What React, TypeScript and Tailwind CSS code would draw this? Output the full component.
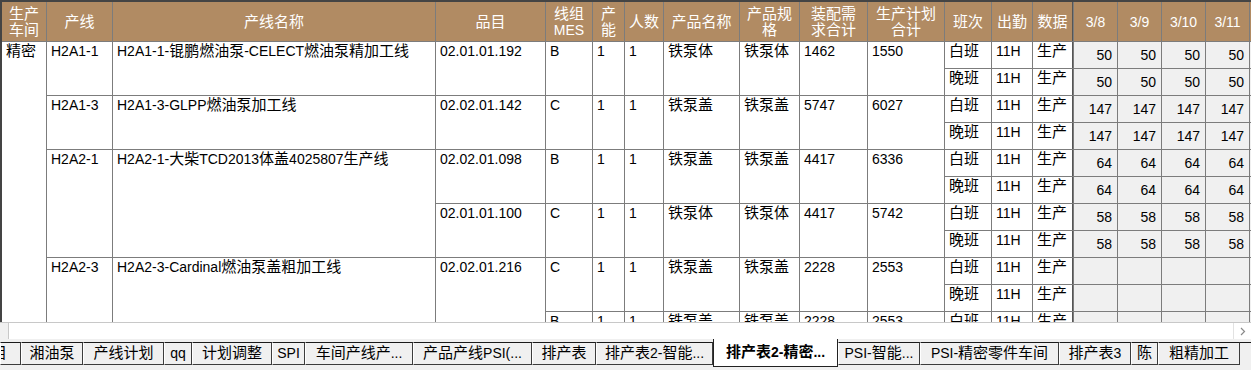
import clsx from "clsx";

const CJK = /([\u3400-\u9fff]+)/;

// CJK runs render a touch larger than the Latin text, like the sheet does
function Txt({ s }: { s: string }) {
  return (
    <span>
      {s.split(CJK).map((p, i) =>
        i % 2 ? (
          <span key={i} className="text-[15px]">
            {p}
          </span>
        ) : (
          p
        )
      )}
    </span>
  );
}

const SPAN: Record<number, string> = {
  2: "row-span-2",
  4: "row-span-4",
  12: "row-span-12",
};

const HEAD = [
  "生产\n车间",
  "产线",
  "产线名称",
  "品目",
  "线组\nMES",
  "产\n能",
  "人数",
  "产品名称",
  "产品规\n格",
  "装配需\n求合计",
  "生产计划\n合计",
  "班次",
  "出勤",
  "数据",
  "3/8",
  "3/9",
  "3/10",
  "3/11",
  "",
];

const LINES = [
  { at: 0, groups: 1, code: "H2A1-1", name: "H2A1-1-锟鹏燃油泵-CELECT燃油泵精加工线" },
  { at: 1, groups: 1, code: "H2A1-3", name: "H2A1-3-GLPP燃油泵加工线" },
  { at: 2, groups: 2, code: "H2A2-1", name: "H2A2-1-大柴TCD2013体盖4025807生产线" },
  { at: 4, groups: 2, code: "H2A2-3", name: "H2A2-3-Cardinal燃油泵盖粗加工线" },
];

const ITEMS = [
  { at: 0, groups: 1, code: "02.01.01.192" },
  { at: 1, groups: 1, code: "02.02.01.142" },
  { at: 2, groups: 1, code: "02.02.01.098" },
  { at: 3, groups: 1, code: "02.01.01.100" },
  { at: 4, groups: 2, code: "02.02.01.216" },
];

const GROUPS = [
  { mes: "B", name: "铁泵体", spec: "铁泵体", need: "1462", plan: "1550", qty: "50" },
  { mes: "C", name: "铁泵盖", spec: "铁泵盖", need: "5747", plan: "6027", qty: "147" },
  { mes: "B", name: "铁泵盖", spec: "铁泵盖", need: "4417", plan: "6336", qty: "64" },
  { mes: "C", name: "铁泵体", spec: "铁泵体", need: "4417", plan: "5742", qty: "58" },
  { mes: "C", name: "铁泵盖", spec: "铁泵盖", need: "2228", plan: "2553", qty: "" },
  { mes: "B", name: "铁泵盖", spec: "铁泵盖", need: "2228", plan: "2553", qty: "" },
];

const TABS = [
  { w: "w-[21px]", label: "目", clip: true },
  { w: "w-[62px]", label: "湘油泵" },
  { w: "w-[81px]", label: "产线计划" },
  { w: "w-[28px]", label: "qq" },
  { w: "w-[80px]", label: "计划调整" },
  { w: "w-[33px]", label: "SPI" },
  { w: "w-[108px]", label: "车间产线产..." },
  { w: "w-[119px]", label: "产品产线PSI(..." },
  { w: "w-[64px]", label: "排产表" },
  { w: "w-[117px]", label: "排产表2-智能..." },
  { w: "w-[125px]", label: "排产表2-精密...", active: true },
  { w: "w-[82px]", label: "PSI-智能..." },
  { w: "w-[139px]", label: "PSI-精密零件车间" },
  { w: "w-[72px]", label: "排产表3" },
  { w: "w-[27px]", label: "陈" },
  { w: "w-[82px]", label: "粗精加工" },
];

function Cell({ s, span, className }: { s: string; span?: number; className?: string }) {
  return (
    <div
      className={clsx(
        "overflow-hidden whitespace-nowrap bg-white px-[4px] leading-[18px]",
        span && SPAN[span],
        className
      )}
    >
      <Txt s={s} />
    </div>
  );
}

function Num({ s }: { s: string }) {
  return (
    <div className="flex items-center justify-end bg-[#f0f0f0] pr-[5px] leading-[18px]">{s}</div>
  );
}

export default function App() {
  const body: JSX.Element[] = [];
  GROUPS.forEach((g, gi) => {
    [0, 1].forEach((shift) => {
      const row = gi * 2 + shift;
      const k = (c: string) => `${row}-${c}`;
      if (row === 0) body.push(<Cell key={k("ws")} s="精密" span={12} />);
      if (shift === 0) {
        const line = LINES.find((l) => l.at === gi);
        if (line) {
          body.push(<Cell key={k("lc")} s={line.code} span={line.groups * 2} />);
          body.push(<Cell key={k("ln")} s={line.name} span={line.groups * 2} />);
        }
        const item = ITEMS.find((it) => it.at === gi);
        if (item) body.push(<Cell key={k("it")} s={item.code} span={item.groups * 2} />);
        body.push(<Cell key={k("mes")} s={g.mes} span={2} />);
        body.push(<Cell key={k("cap")} s="1" span={2} />);
        body.push(<Cell key={k("ppl")} s="1" span={2} />);
        body.push(<Cell key={k("pn")} s={g.name} span={2} />);
        body.push(<Cell key={k("ps")} s={g.spec} span={2} />);
        body.push(<Cell key={k("nd")} s={g.need} span={2} />);
        body.push(<Cell key={k("pl")} s={g.plan} span={2} />);
      }
      body.push(<Cell key={k("sh")} s={shift ? "晚班" : "白班"} />);
      body.push(<Cell key={k("hr")} s="11H" />);
      body.push(<Cell key={k("dt")} s="生产" className="border-r border-[#555]" />);
      [0, 1, 2, 3].forEach((d) => body.push(<Num key={k(`d${d}`)} s={g.qty} />));
      body.push(<div key={k("fill")} className="bg-[#f0f0f0]" />);
    });
  });

  return (
    <div className="h-[370px] w-[1251px] overflow-hidden bg-[#f0f0f0] font-['Liberation_Sans','Noto_Sans_CJK_SC',sans-serif] text-[14px] text-black">
      {/* 表格区域 */}
      <div className="h-[322px] overflow-hidden border-l-2 border-t-2 border-[#444]">
        <div className="grid grid-cols-[44px_65px_322px_109px_46px_31px_38px_75px_59px_67px_76px_46px_40px_40px_43px_43px_43px_43px_1fr] grid-rows-[39px_repeat(12,26px)] gap-px bg-[#7c7c7c]">
          {HEAD.map((h, i) => (
            <div
              key={i}
              className={clsx(
                "flex items-center justify-center whitespace-pre-line bg-[#b18b63] text-center leading-[16px] text-white",
                i === 13 && "border-r border-[#555]"
              )}
            >
              <Txt s={h} />
            </div>
          ))}
          {body}
        </div>
      </div>

      {/* 横向滚动条 */}
      <div className="flex h-[17px] border-t border-[#c8c8c8] bg-white">
        <div className="w-[9px] border-r border-[#c8c8c8] bg-[#f0f0f0]" />
        <div className="flex-1" />
        <div className="flex w-[18px] items-center justify-center border-l border-[#e2e2e2]">
          <svg width="6" height="9" viewBox="0 0 6 9" fill="none">
            <path d="M1 1l3.5 3.5L1 8" stroke="#8a8a8a" strokeWidth="1.2" />
          </svg>
        </div>
      </div>

      {/* 工作表标签 */}
      <div className="flex h-[31px] items-start bg-[#f0f0f0] pt-[3px]">
        {TABS.map((t) =>
          t.active ? (
            <div
              key={t.label}
              className={clsx(
                t.w,
                "-mt-[3px] flex h-[28px] shrink-0 items-center justify-center border-x border-b border-[#222] bg-white font-bold"
              )}
            >
              <Txt s={t.label} />
            </div>
          ) : (
            <div
              key={t.label}
              className={clsx(
                t.w,
                "flex h-[23px] shrink-0 items-center overflow-hidden whitespace-nowrap border-y border-l border-r border-t-[#1a1a1a] border-b-[#3c3c3c] border-l-white border-r-[#3c3c3c] bg-[#f0f0f0]",
                t.clip ? "justify-end pr-[13px]" : "justify-center"
              )}
            >
              <Txt s={t.label} />
            </div>
          )
        )}
        <div className="h-[23px] flex-1 border-t border-[#1a1a1a]" />
      </div>
    </div>
  );
}
